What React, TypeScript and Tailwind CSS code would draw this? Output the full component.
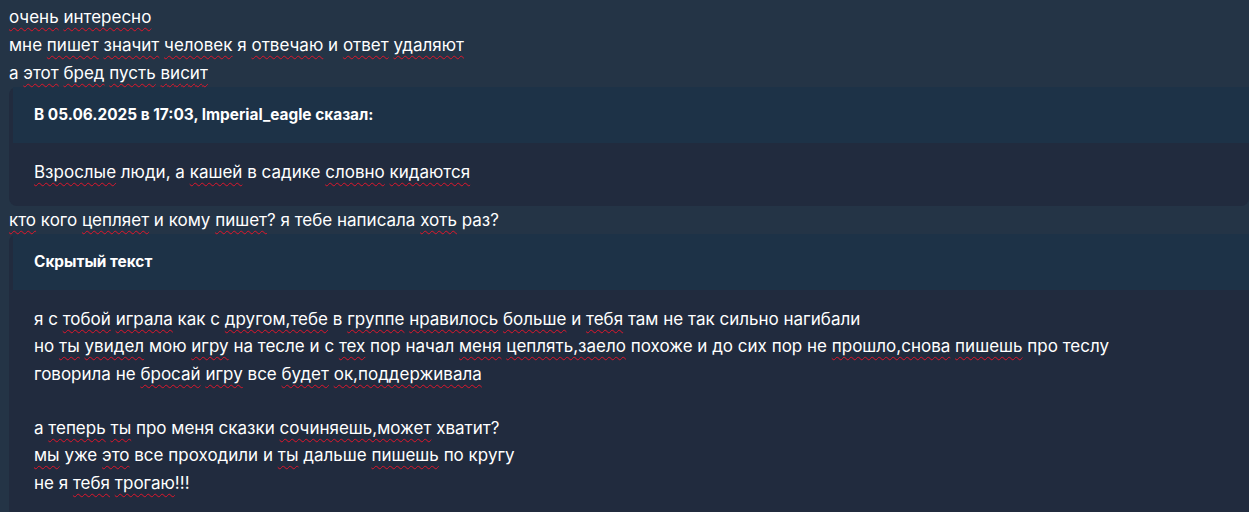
import { ReactNode } from "react";

function W({ children }: { children: ReactNode }) {
  return (
    <span className="underline decoration-wavy decoration-[#e0162b] decoration-1 underline-offset-[4px] [text-decoration-skip-ink:none]">
      {children}
    </span>
  );
}

function Block({ header, children }: { header: ReactNode; children: ReactNode }) {
  return (
    <div className="ml-[9px] rounded-lg bg-[#212b3e] pl-1">
      <div className="bg-[#1d3247] px-[21px] py-[20px] text-[15.4px] font-bold leading-[16px]">
        {header}
      </div>
      {children}
    </div>
  );
}

export default function App() {
  return (
    <div
      className="min-h-[512px] bg-[#243446] pt-[3px] text-[17px] leading-[28px] text-white"
      style={{ fontFamily: "Inter, Roboto, 'Noto Sans', sans-serif" }}
    >
      <div className="px-[9px]">
        <p>
          <W>очень</W> <W>интересно</W>
        </p>
        <p>
          мне <W>пишет</W> <W>значит</W> <W>человек</W> я <W>отвечаю</W> и{" "}
          <W>ответ</W> <W>удаляют</W>
        </p>
        <p>
          а <W>этот</W> <W>бред</W> <W>пусть</W> <W>висит</W>
        </p>
      </div>

      <Block header="В 05.06.2025 в 17:03, Imperial_eagle сказал:">
        <div className="px-[21px] pb-[20px] pt-[15px]">
          <W>Взрослые</W> люди, а <W>кашей</W> в садике <W>словно</W>{" "}
          <W>кидаются</W>
        </div>
      </Block>

      <p className="px-[9px]">
        <W>кто</W> кого <W>цепляет</W> и кому <W>пишет</W>? я тебе написала{" "}
        <W>хоть</W> раз?
      </p>

      <Block header="Скрытый текст">
        <div className="px-[21px] pb-[20px] pt-[16px] leading-[27.3px]">
          <p>
            я с <W>тобой</W> <W>играла</W> как с <W>другом,тебе</W> в <W>группе</W>{" "}
            <W>нравилось</W> <W>больше</W> и <W>тебя</W> там не так сильно нагибали
          </p>
          <p>
            но <W>ты</W> <W>увидел</W> мою <W>игру</W> на тесле и с <W>тех</W> пор
            начал <W>меня</W> <W>цеплять,заело</W> похоже и до сих пор не{" "}
            <W>прошло,снова</W> <W>пишешь</W> про теслу
          </p>
          <p>
            говорила не <W>бросай</W> <W>игру</W> все <W>будет</W>{" "}
            <W>ок,поддерживала</W>
          </p>
          <p>&nbsp;</p>
          <p>
            а <W>теперь</W> <W>ты</W> про меня сказки <W>сочиняешь,может</W> хватит?
          </p>
          <p>
            <W>мы</W> уже <W>это</W> все проходили и <W>ты</W> дальше <W>пишешь</W>{" "}
            по кругу
          </p>
          <p>
            не я <W>тебя</W> <W>трогаю</W>!!!
          </p>
        </div>
      </Block>
    </div>
  );
}
